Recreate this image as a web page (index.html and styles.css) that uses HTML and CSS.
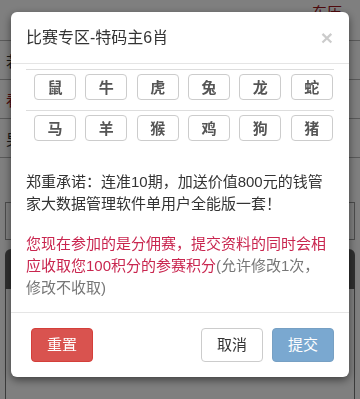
FILE: index.html
```html
<!DOCTYPE html>
<html lang="zh-CN">
<head>
  <meta charset="UTF-8">
  <title>比赛专区</title>
  <link rel="stylesheet" href="styles.css">
</head>
<body>
  <div class="page">
    <div class="topbar"><span class="top-red">东历</span></div>
    <div class="prow"><span class="ptxt">若</span></div>
    <div class="prow"><span class="ptxt red">看</span></div>
    <div class="prow"><span class="ptxt">男</span></div>
    <div class="pbox"></div>
    <div class="pdark"></div>
    <div class="pcard"></div>
    <div class="pbar"></div>
  </div>

  <div class="backdrop">
    <div class="modal">
      <div class="modal-header">
        <h4 class="modal-title">比赛专区-特码主6肖</h4>
        <span class="close">&times;</span>
      </div>

      <div class="modal-body">
        <div class="zodiac">
          <div class="zrow">
            <div class="zcell"><button class="zbtn">鼠</button></div>
            <div class="zcell"><button class="zbtn">牛</button></div>
            <div class="zcell"><button class="zbtn">虎</button></div>
            <div class="zcell"><button class="zbtn">兔</button></div>
            <div class="zcell"><button class="zbtn">龙</button></div>
            <div class="zcell"><button class="zbtn">蛇</button></div>
          </div>
          <div class="zrow">
            <div class="zcell"><button class="zbtn">马</button></div>
            <div class="zcell"><button class="zbtn">羊</button></div>
            <div class="zcell"><button class="zbtn">猴</button></div>
            <div class="zcell"><button class="zbtn">鸡</button></div>
            <div class="zcell"><button class="zbtn">狗</button></div>
            <div class="zcell"><button class="zbtn">猪</button></div>
          </div>
        </div>

        <p class="promise">郑重承诺：连准10期，加送价值800元的钱管家大数据管理软件单用户全能版一套！</p>
        <p class="notice">您现在参加的是分佣赛，提交资料的同时会相应收取您100积分的参赛积分<span class="muted">(允许修改1次，修改不收取)</span></p>
      </div>

      <div class="modal-footer">
        <button class="btn btn-danger">重置</button>
        <button class="btn btn-default push">取消</button>
        <button class="btn btn-primary" disabled>提交</button>
      </div>
    </div>
  </div>
</body>
</html>
```

FILE: styles.css
```css
body {
  margin: 0;
  padding: 0;
  font-family: "Liberation Sans", "Noto Sans CJK SC", sans-serif;
  color: #333;
  background: #fff;
  overflow: hidden;
}

/* page behind the dialog */
.page {
  height: 399px;
  overflow: hidden;
}

.topbar {
  height: 36px;
  padding: 4px 18px 0 0;
  border-bottom: 1px solid #b4b4b4;
  display: flex;
  justify-content: flex-end;
  align-items: flex-start;
}

.top-red {
  color: #a0151c;
  font-size: 15px;
  line-height: 18px;
}

.prow {
  height: 38px;
  border-bottom: 1px solid #b4b4b4;
  display: flex;
  align-items: center;
  padding-left: 6px;
}

.ptxt {
  font-size: 15px;
  color: #333;
}

.ptxt.red {
  color: #a0151c;
}

.pbox {
  margin: 44px 5px 0;
  height: 36px;
  border: 1px solid #999;
}

.pdark {
  margin: 9px 5px 0;
  height: 40px;
  background: #606060;
  border-radius: 6px 6px 0 0;
}

.pcard {
  margin: 0 5px;
  height: 137px;
  border: 1px solid #777;
  border-top: none;
  border-radius: 0 0 6px 6px;
}

.pbar {
  margin: 5px 3px 0;
  height: 6px;
  background: #6e6e6e;
  border-radius: 6px 6px 0 0;
}

/* dialog */
.backdrop {
  position: fixed;
  top: 0;
  left: 0;
  right: 0;
  bottom: 0;
  background: rgba(0, 0, 0, 0.5);
}

.modal {
  margin: 12px 0 0 11px;
  width: 338px;
  background: #fff;
  border-radius: 6px;
  box-shadow: 0 3px 9px rgba(0, 0, 0, 0.5);
}

.modal-header {
  display: flex;
  justify-content: space-between;
  align-items: center;
  padding: 15px;
  border-bottom: 1px solid #e5e5e5;
}

.modal-title {
  margin: 0;
  font-size: 16px;
  font-weight: normal;
  line-height: 21px;
  color: #333;
}

.close {
  font-size: 21px;
  font-weight: bold;
  line-height: 21px;
  color: #000;
  opacity: 0.2;
  margin-right: 1px;
}

.modal-body {
  padding: 5px 15px 13px;
}

.zrow {
  display: grid;
  grid-template-columns: repeat(6, 1fr);
  border-top: 1px solid #ddd;
  padding: 4px 0 10px;
}

.zcell {
  padding-left: 8px;
}

.zbtn {
  display: block;
  width: 42px;
  height: 26px;
  padding: 0;
  background: #fff;
  border: 1px solid #ccc;
  border-radius: 4px;
  font-family: "Noto Sans CJK SC", sans-serif;
  font-size: 15px;
  font-weight: bold;
  color: #555;
  line-height: 24px;
}

.promise,
.notice {
  margin: 0;
  font-size: 15px;
  line-height: 22px;
}

.promise {
  margin-top: 20px;
}

.notice {
  margin-top: 18px;
  color: #c9264f;
}

.muted {
  color: #777;
}

.modal-footer {
  display: flex;
  padding: 15px;
  border-top: 1px solid #e5e5e5;
}

.btn {
  height: 34px;
  padding: 0 15px;
  font-family: "Liberation Sans", "Noto Sans CJK SC", sans-serif;
  font-size: 15px;
  line-height: 32px;
  border: 1px solid transparent;
  border-radius: 4px;
}

.btn-danger {
  margin-left: 5px;
  background: #d9534f;
  border-color: #d43f3a;
  color: #fff;
}

.btn-default {
  background: #fff;
  border-color: #ccc;
  color: #333;
}

.push {
  margin-left: auto;
  margin-right: 9px;
}

.btn-primary {
  background: #337ab7;
  border-color: #2e6da4;
  color: #fff;
  opacity: 0.65;
}
```
